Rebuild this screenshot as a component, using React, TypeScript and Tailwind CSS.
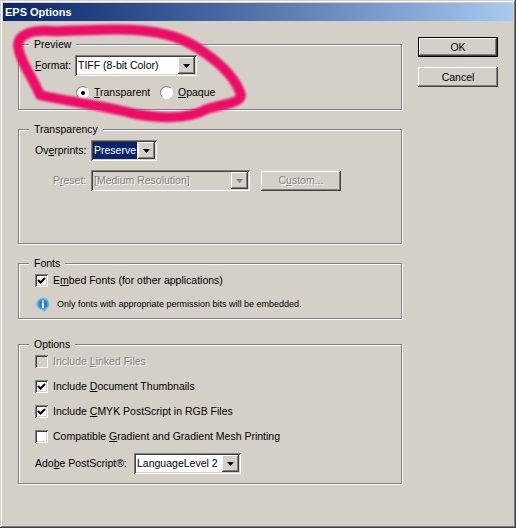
import React from "react";

const F = "font-['Liberation_Sans',sans-serif]";
const sunken =
  "shadow-[inset_1px_1px_0_#808080,inset_-1px_-1px_0_#ffffff,inset_2px_2px_0_#404040,inset_-2px_-2px_0_#d4d0c8]";
const raised =
  "shadow-[inset_-1px_-1px_0_#404040,inset_1px_1px_0_#ffffff,inset_-2px_-2px_0_#808080]";
const disabled = "text-[#808080] [text-shadow:1px_1px_0_#ffffff]";
const T = "text-[10.5px] leading-none whitespace-nowrap";

function Group({ label, className, children }: { label: string; className: string; children?: React.ReactNode }) {
  return (
    <div className={`relative border border-[#808080] shadow-[inset_1px_1px_0_#ffffff,1px_1px_0_#ffffff] ${className}`}>
      <span className={`absolute left-[10px] top-[-9px] flex h-[16px] items-center bg-[#d4d0c8] px-[5px] text-black ${T}`}>{label}</span>
      {children}
    </div>
  );
}

function Arrow({ off }: { off?: boolean }) {
  return (
    <span className={`flex h-[17px] w-[17px] shrink-0 items-center justify-center bg-[#d4d0c8] ${raised}`}>
      <svg width="7" height="4" viewBox="0 0 7 4"><path d="M0 0h7L3.5 4z" fill={off ? "#808080" : "#000000"} /></svg>
    </span>
  );
}

function Combo({ w, text, sel, off }: { w: string; text: string; sel?: boolean; off?: boolean }) {
  return (
    <div className={`flex h-[21px] shrink-0 items-center justify-between p-[2px] ${sunken} ${off ? "bg-[#d4d0c8]" : "bg-white"} ${w}`}>
      <span className={`mr-[1px] flex h-[17px] flex-1 items-center pl-[1px] ${T} ${sel ? "bg-[#0a246a] text-white" : off ? disabled : "text-black"}`}>{text}</span>
      <Arrow off={off} />
    </div>
  );
}

function Check({ label, checked, off }: { label: React.ReactNode; checked?: boolean; off?: boolean }) {
  return (
    <div className="flex h-[25px] items-center gap-[5px]">
      <span className={`flex h-[13px] w-[13px] items-center justify-center ${sunken} ${off ? "bg-[#d4d0c8]" : "bg-white"}`}>
        {checked && (
          <svg width="9" height="9" viewBox="0 0 9 9"><path d="M1 4l2.5 2.5L8 2" fill="none" stroke="#000000" strokeWidth="2" /></svg>
        )}
      </span>
      <span className={`${T} ${off ? disabled : "text-black"}`}>{label}</span>
    </div>
  );
}

function Radio({ on, label, w }: { on?: boolean; label: React.ReactNode; w: string }) {
  return (
    <div className={`flex items-center gap-[5px] ${w}`}>
      <span className="flex h-[13px] w-[13px] items-center justify-center rounded-full border border-b-white border-l-[#808080] border-r-white border-t-[#808080] bg-white">
        {on && <span className="h-[4px] w-[4px] rounded-full bg-black" />}
      </span>
      <span className={`text-black ${T}`}>{label}</span>
    </div>
  );
}

function Btn({ children, def, off }: { children: React.ReactNode; def?: boolean; off?: boolean }) {
  return (
    <div className={`flex h-[20px] w-[80px] items-center justify-center bg-[#d4d0c8] ${T} ${off ? disabled : "text-black"} ${def ? "shadow-[inset_0_0_0_1px_#000000,inset_-2px_-2px_0_#404040,inset_2px_2px_0_#ffffff,inset_-3px_-3px_0_#808080]" : raised}`}>
      {children}
    </div>
  );
}

export default function App() {
  return (
    <div className={`relative flex h-[528px] w-[516px] flex-col overflow-hidden bg-[#d4d0c8] p-[3px] shadow-[inset_-1px_-1px_0_#404040,inset_1px_1px_0_#d4d0c8,inset_-2px_-2px_0_#808080,inset_2px_2px_0_#ffffff] ${F}`}>
      <div className="flex h-[18px] shrink-0 items-center bg-gradient-to-r from-[#0a246a] to-[#a6caf0] pl-[2px] text-[11px] font-bold leading-none text-white">
        EPS Options
      </div>
      <div className="flex flex-1">
        <div className="ml-[15px] mt-[23px] flex w-[384px] flex-col">
          <Group label="Preview" className="h-[66px]">
            <div className="ml-[16px] mt-[10px] flex items-center">
              <span className={`w-[40px] text-black ${T}`}><u>F</u>ormat:</span>
              <Combo w="w-[122px]" text="TIFF (8-bit Color)" />
            </div>
            <div className="ml-[57px] mt-[10px] flex">
              <Radio on w="w-[84px]" label={<><u>T</u>ransparent</>} />
              <Radio w="w-[70px]" label={<><u>O</u>paque</>} />
            </div>
          </Group>
          <Group label="Transparency" className="mt-[19px] h-[115px]">
            <div className="ml-[16px] mt-[10px] flex items-center">
              <span className={`w-[56px] text-black ${T}`}>Ov<u>e</u>rprints:</span>
              <Combo w="w-[66px]" text="Preserve" sel />
            </div>
            <div className="ml-[34px] mt-[9px] flex items-center">
              <span className={`w-[38px] ${T} ${disabled}`}>P<u>r</u>eset:</span>
              <Combo w="w-[159px]" text="[Medium Resolution]" off />
              <div className="ml-[11px]"><Btn off>C<u>u</u>stom...</Btn></div>
            </div>
          </Group>
          <Group label="Fonts" className="mt-[19px] h-[56px]">
            <div className="ml-[16px] mt-[4px]">
              <Check checked label={<>E<u>m</u>bed Fonts (for other applications)</>} />
            </div>
            <div className="ml-[17px] mt-[4px] flex items-center gap-[7px]">
              <svg width="14" height="15" viewBox="0 0 14 15">
                <path d="M7 1a6 6 0 0 1 3 11.2L9 14.5 6.5 13A6 6 0 0 1 7 1z" fill="#4aa3df" stroke="#8cc4e8" />
                <circle cx="7" cy="7" r="4" fill="#2f7fc0" />
                <rect x="6" y="3.5" width="2" height="2" fill="#ffffff" />
                <rect x="6" y="6" width="2" height="5" fill="#ffffff" />
              </svg>
              <span className="whitespace-nowrap text-[9px] leading-none text-black">Only fonts with appropriate permission bits will be embedded.</span>
            </div>
          </Group>
          <Group label="Options" className="mt-[25px] h-[140px]">
            <div className="ml-[16px] mt-[4px] flex flex-col">
              <Check off label={<>Include <u>L</u>inked Files</>} />
              <Check checked label={<>Include <u>D</u>ocument Thumbnails</>} />
              <Check checked label={<>Include <u>C</u>MYK PostScript in RGB Files</>} />
              <Check label={<>Compatible <u>G</u>radient and Gradient Mesh Printing</>} />
            </div>
            <div className="ml-[16px] mt-[4px] flex items-center">
              <span className={`w-[99px] text-black ${T}`}>Ado<u>b</u>e PostScript®:</span>
              <Combo w="w-[107px]" text="LanguageLevel 2" />
            </div>
          </Group>
        </div>
        <div className="ml-[16px] mt-[16px] flex flex-col gap-[10px]">
          <Btn def>OK</Btn>
          <Btn>Cancel</Btn>
        </div>
      </div>
      <svg className="pointer-events-none absolute left-0 top-0" width="516" height="528" viewBox="0 0 516 528">
        <defs><filter id="b"><feGaussianBlur stdDeviation="1.2" /></filter></defs>
        <path
          d="M50 31C32 30 18 34 18 46C20 62 32 76 40 95C65 101 100 105 135 114C165 119 190 119 207 109C224 104 241 103 241 95C236 78 222 65 205 53C185 38 165 32 135 30C105 28 75 32 50 31Z"
          fill="none"
          stroke="#ee1066"
          strokeWidth="10"
          strokeLinejoin="round"
          filter="url(#b)"
        />
      </svg>
    </div>
  );
}
